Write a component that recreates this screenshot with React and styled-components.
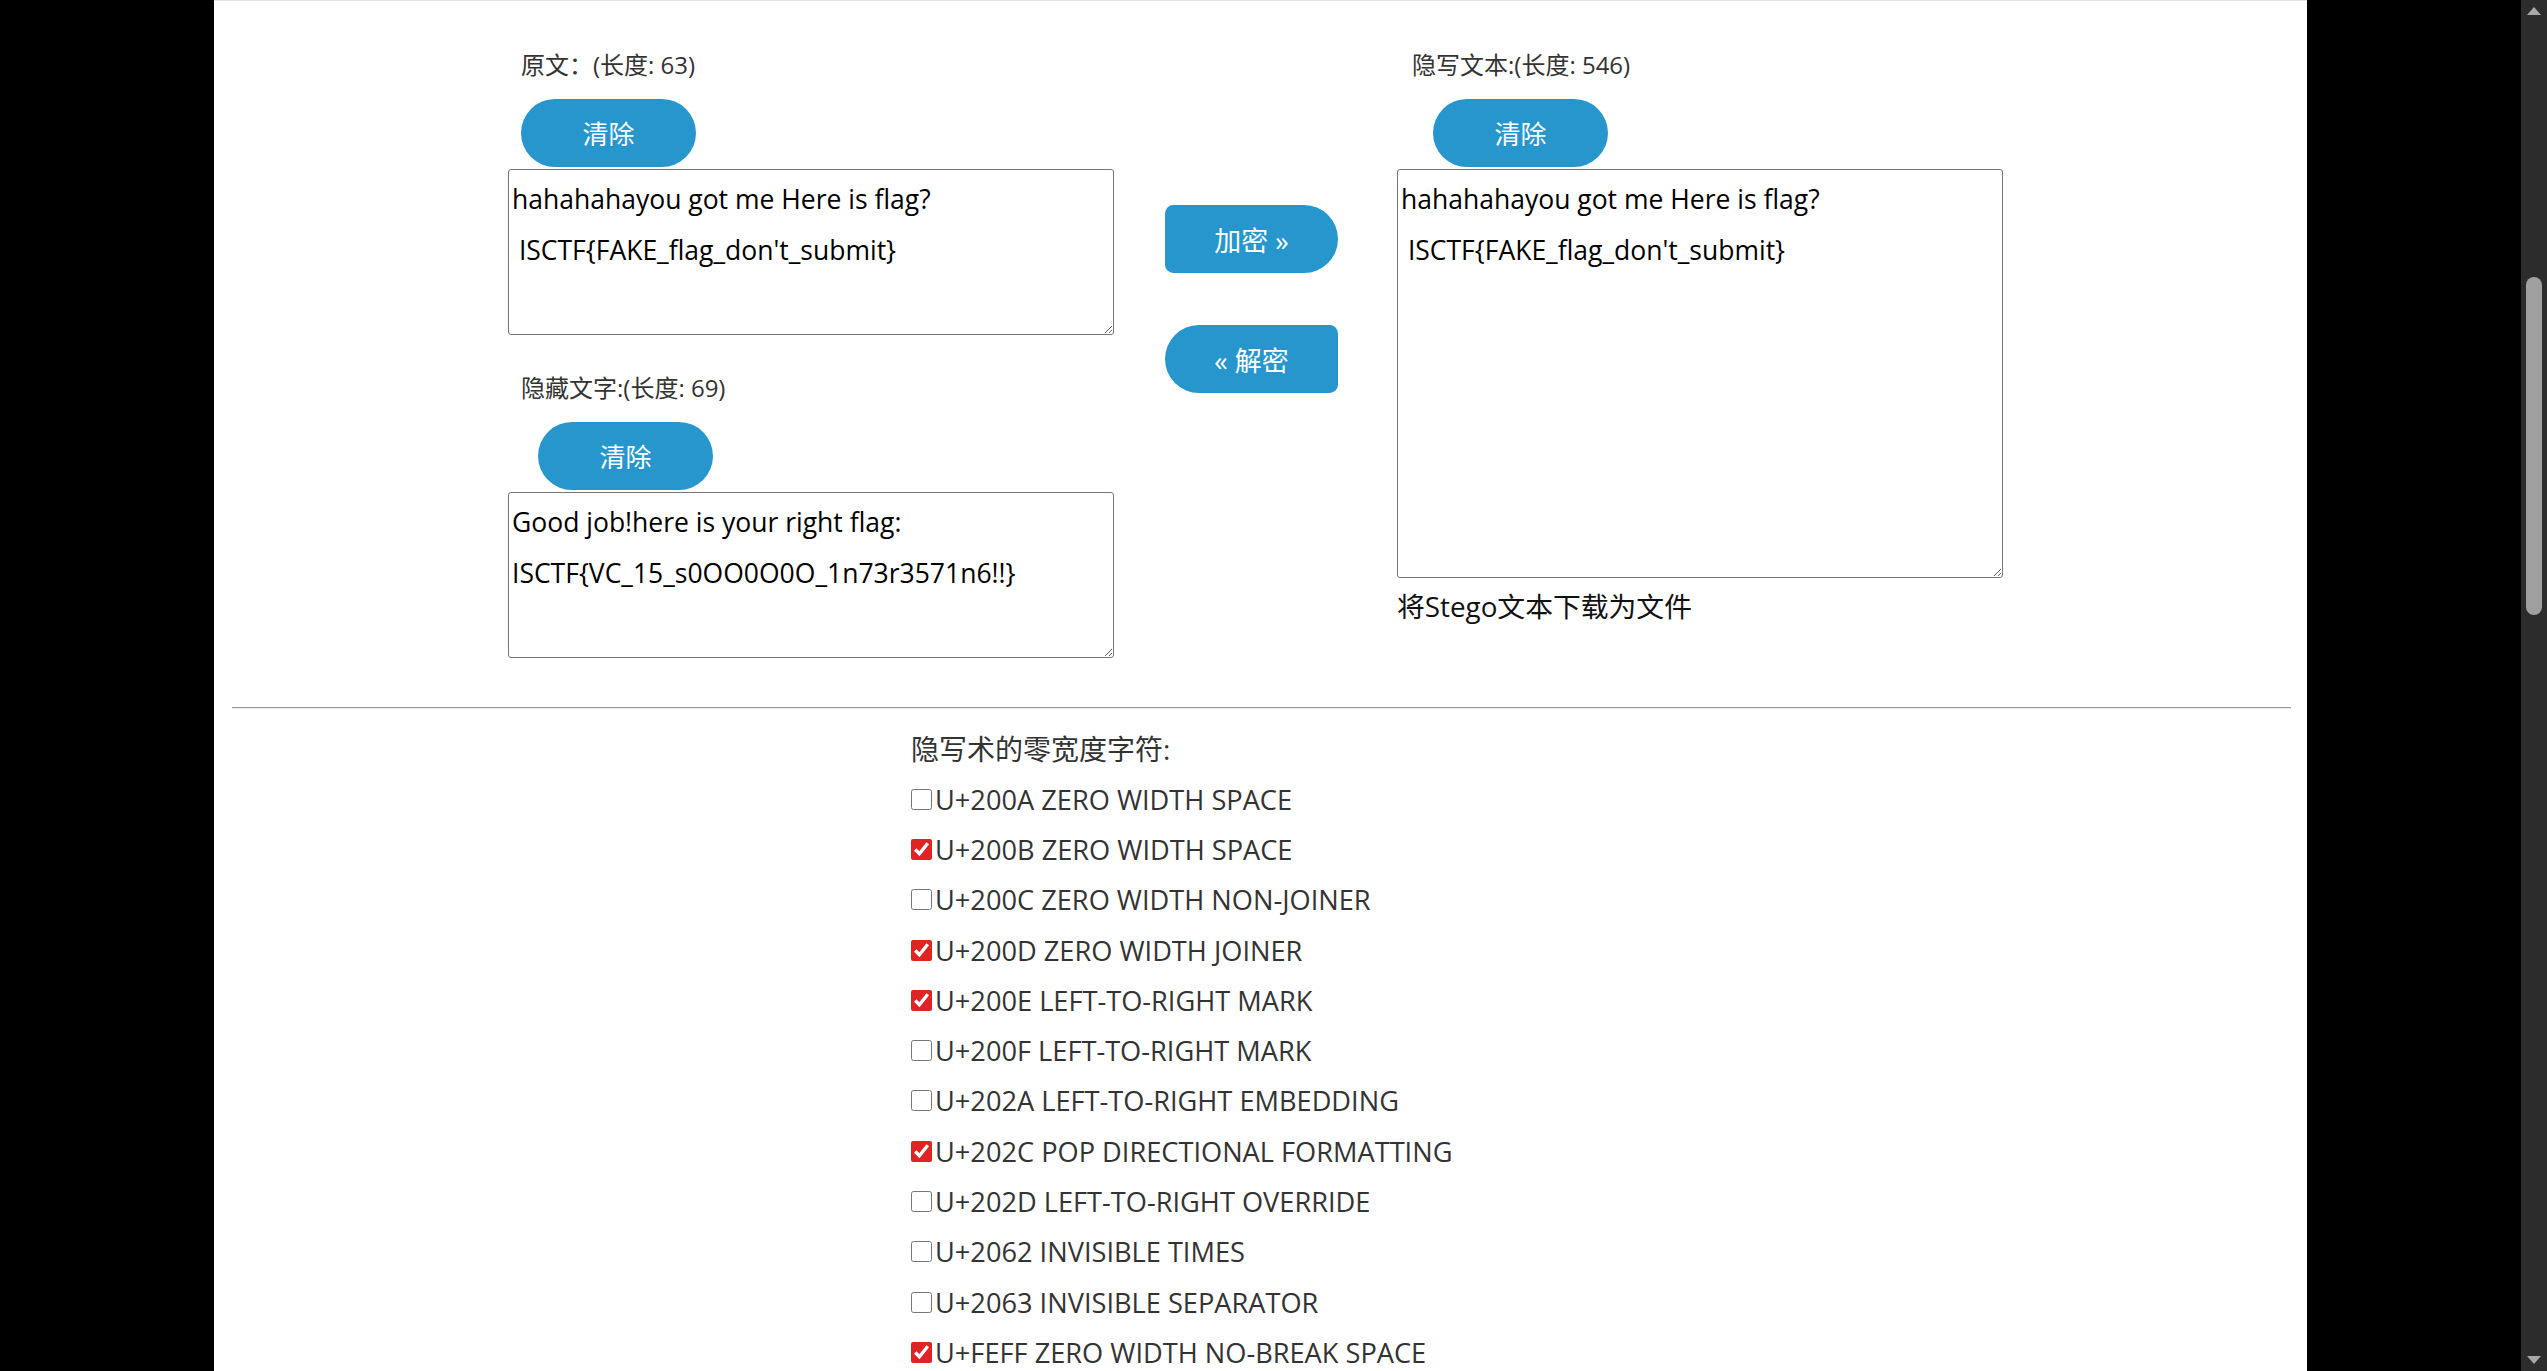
import React from "react";
import styled, { createGlobalStyle } from "styled-components";

const GlobalStyle = createGlobalStyle`
  html, body {
    margin: 0;
    padding: 0;
    background: #000;
    overflow: hidden;
  }
  body {
    font-family: "Open Sans", "Noto Sans CJK SC", sans-serif;
  }
`;

const Window = styled.div`
  display: flex;
  height: 100vh;
`;

const Viewport = styled.div`
  flex: 1;
  overflow: hidden;
  display: flex;
  justify-content: center;
`;

const Panel = styled.main`
  width: 2093px;
  min-height: 100%;
  box-sizing: border-box;
  background: #fff;
  border-top: 1px solid #e4e4e4;
  padding-bottom: 200px;
`;

const Editor = styled.section`
  display: flex;
  align-items: flex-start;
  padding-left: 294px;
`;

const Column = styled.div`
  display: flex;
  flex-direction: column;
  align-items: flex-start;
  width: ${(p) => p.$width}px;
  margin-left: ${(p) => p.$offset || 0}px;
  padding-top: ${(p) => p.$top || 0}px;
`;

const Label = styled.div`
  font-size: 24px;
  line-height: 30px;
  color: #333;
  margin: ${(p) => p.$top}px 0 0 ${(p) => p.$indent}px;
  white-space: nowrap;
`;

const ClearButton = styled.button`
  width: 175px;
  height: 68px;
  margin: 19px 0 0 ${(p) => p.$indent}px;
  border: none;
  border-radius: 40px;
  background: #2696cd;
  color: #fff;
  font-family: inherit;
  font-size: 26px;
  cursor: pointer;
`;

const TextBox = styled.textarea`
  display: block;
  width: 606px;
  height: ${(p) => p.$height}px;
  margin-top: 2px;
  box-sizing: border-box;
  border: 1px solid #767676;
  border-radius: 3px;
  padding: 4px 3px 2px;
  font-family: inherit;
  font-size: 26.5px;
  line-height: 51px;
  color: #000;
  background: #fff;
  outline: none;
  resize: both;
`;

const CryptButton = styled.button`
  width: 173px;
  height: 68px;
  margin-top: ${(p) => p.$top || 0}px;
  border: none;
  border-radius: ${(p) =>
    p.$dir === "right" ? "10px 40px 40px 10px" : "40px 10px 10px 40px"};
  background: #2696cd;
  color: #fff;
  font-family: inherit;
  font-size: 27px;
  cursor: pointer;
`;

const Download = styled.div`
  margin-top: 10px;
  font-size: 27.8px;
  line-height: 36px;
  color: #111;
  white-space: nowrap;
`;

const Rule = styled.hr`
  height: 0;
  margin: 49px 16px 0 18px;
  border: none;
  border-top: 1px solid #9a9a9a;
  border-bottom: 1px solid #ececec;
`;

const Chars = styled.section`
  padding-left: 697px;
  padding-top: 15px;
`;

const Heading = styled.div`
  font-size: 28px;
  line-height: 50px;
  color: #333;
`;

const Option = styled.label`
  display: flex;
  align-items: center;
  height: 50.3px;
  font-size: 27.2px;
  color: #333;
  white-space: nowrap;
`;

const Check = styled.input`
  width: 21px;
  height: 21px;
  margin: 0 3px 0 0;
  accent-color: #e02424;
`;

const Track = styled.aside`
  width: 26px;
  flex-shrink: 0;
  background: #2c2c2c;
  display: flex;
  flex-direction: column;
  align-items: center;
`;

const Arrow = styled.div`
  height: 22px;
  display: flex;
  align-items: center;
  justify-content: center;
`;

const Thumb = styled.div`
  width: 16px;
  height: 338px;
  margin-top: 255px;
  border-radius: 8px;
  background: #9f9f9f;
`;

const Spacer = styled.div`
  flex: 1;
`;

const chars = [
  ["U+200A ZERO WIDTH SPACE", false],
  ["U+200B ZERO WIDTH SPACE", true],
  ["U+200C ZERO WIDTH NON-JOINER", false],
  ["U+200D ZERO WIDTH JOINER", true],
  ["U+200E LEFT-TO-RIGHT MARK", true],
  ["U+200F LEFT-TO-RIGHT MARK", false],
  ["U+202A LEFT-TO-RIGHT EMBEDDING", false],
  ["U+202C POP DIRECTIONAL FORMATTING", true],
  ["U+202D LEFT-TO-RIGHT OVERRIDE", false],
  ["U+2062 INVISIBLE TIMES", false],
  ["U+2063 INVISIBLE SEPARATOR", false],
  ["U+FEFF ZERO WIDTH NO-BREAK SPACE", true],
];

const plain = "hahahahayou got me Here is flag?\n ISCTF{FAKE_flag_don't_submit}";
const hidden = "Good job!here is your right flag:\nISCTF{VC_15_s0OO0O0O_1n73r3571n6!!}";

const ArrowIcon = ({ down }) => (
  <svg width="14" height="8" viewBox="0 0 14 8">
    <path d={down ? "M0 0 H14 L7 8 Z" : "M0 8 H14 L7 0 Z"} fill="#a8a8a8" />
  </svg>
);

const App = () => {
  return (
    <>
      <GlobalStyle />
      <Window>
        <Viewport>
          <Panel>
            <Editor>
              <Column $width={606}>
                <Label $top={49} $indent={13}>原文：(长度: 63)</Label>
                <ClearButton $indent={13}>清除</ClearButton>
                <TextBox $height={166} value={plain} readOnly />
                <Label $top={38} $indent={13}>隐藏文字:(长度: 69)</Label>
                <ClearButton $indent={30}>清除</ClearButton>
                <TextBox $height={166} value={hidden} readOnly />
              </Column>
              <Column $width={173} $offset={51} $top={204}>
                <CryptButton $dir="right">加密 »</CryptButton>
                <CryptButton $dir="left" $top={52}>« 解密</CryptButton>
              </Column>
              <Column $width={606} $offset={59}>
                <Label $top={49} $indent={15}>隐写文本:(长度: 546)</Label>
                <ClearButton $indent={36}>清除</ClearButton>
                <TextBox $height={409} value={plain} readOnly />
                <Download>将Stego文本下载为文件</Download>
              </Column>
            </Editor>
            <Rule />
            <Chars>
              <Heading>隐写术的零宽度字符:</Heading>
              {chars.map(([name, on]) => (
                <Option key={name}>
                  <Check type="checkbox" defaultChecked={on} />
                  {name}
                </Option>
              ))}
            </Chars>
          </Panel>
        </Viewport>
        <Track>
          <Arrow>
            <ArrowIcon />
          </Arrow>
          <Thumb />
          <Spacer />
          <Arrow>
            <ArrowIcon down />
          </Arrow>
        </Track>
      </Window>
    </>
  );
};

export default App;
